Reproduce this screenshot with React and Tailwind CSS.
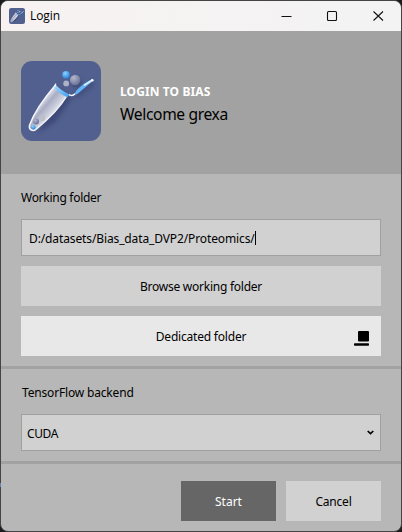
import React from "react";

function TubeLogo({ className }) {
  return (
    <svg viewBox="0 0 80 80" className={className} aria-hidden="true">
      <defs>
        <linearGradient id="glass" gradientUnits="userSpaceOnUse" x1="20" y1="40" x2="34" y2="52">
          <stop offset="0" stopColor="#e4e6ef" />
          <stop offset="0.35" stopColor="#a9adc4" />
          <stop offset="0.7" stopColor="#c6c9d8" />
          <stop offset="1" stopColor="#e6e8f0" />
        </linearGradient>
        <linearGradient id="blue" x1="0" y1="0" x2="1" y2="1">
          <stop offset="0" stopColor="#a4dcff" />
          <stop offset="1" stopColor="#3c9cf0" />
        </linearGradient>
        <radialGradient id="ballBlue" cx="0.4" cy="0.3" r="0.7">
          <stop offset="0" stopColor="#8ad4ff" />
          <stop offset="1" stopColor="#2d84da" />
        </radialGradient>
        <radialGradient id="ballGrey" cx="0.35" cy="0.3" r="0.75">
          <stop offset="0" stopColor="#b4b8cc" />
          <stop offset="1" stopColor="#666d94" />
        </radialGradient>
        <filter id="soft" x="-30%" y="-30%" width="160%" height="160%">
          <feGaussianBlur stdDeviation="2.2" />
        </filter>
      </defs>
      <rect width="80" height="80" rx="11" fill="#52608f" />
      <g fill="#303b68" opacity="0.6" filter="url(#soft)">
        <path d="M38 27 L51 37 L34 61 L17 72 Z" />
        <path d="M50 37 L72 20 L73 24 L57 36 Z" />
        <circle cx="56" cy="22" r="5" />
      </g>
      <path
        d="M34.5 24 L46 34.5 C41 44 30 56 15 68.5 C11.5 71 7.3 68.5 8.6 64 C12.5 53.5 22 38.5 34.5 24 Z"
        fill="url(#glass)"
      />
      <path d="M45.5 35.5 C40.5 44 30 56 15 68.5" fill="none" stroke="#f4f5fa" strokeWidth="1.4" />
      <path d="M34.5 24 C22 38.5 12.5 53.5 8.6 64 C7.3 68.5 11.5 71 15 68.5" fill="none" stroke="#f4f5fa" strokeWidth="1.5" />
      <path d="M34.2 23.6 C37 26.5 42 30.8 48.5 33.4 L46.5 36.2 C40.5 33.8 36 31 33 26.3 Z" fill="url(#blue)" />
      <path d="M33.9 25.5 L34.6 23.2 M48.5 33.8 C50.5 35 52.5 34.5 54.2 32.8" fill="none" stroke="#f2f8ff" strokeWidth="1.4" strokeLinecap="round" />
      <path d="M54 33 C53.5 30 62 23 69.5 18.8 L70.5 21 L57.5 32 C56 33.3 55 33.6 54 33 Z" fill="#62b4f8" />
      <path d="M63.5 24 L71.2 19.2" fill="none" stroke="#d5edff" strokeWidth="1.8" strokeLinecap="round" />
      <circle cx="71.3" cy="19.2" r="1.3" fill="#fff" />
      <circle cx="54.2" cy="19" r="5.3" fill="url(#ballGrey)" />
      <circle cx="45" cy="13.8" r="3.8" fill="url(#ballBlue)" />
      <circle cx="45.2" cy="22.4" r="2.9" fill="#adb2c6" />
      <circle cx="21" cy="56.8" r="3.1" fill="#bcbfca" />
      <circle cx="15" cy="60.5" r="3" fill="url(#ballGrey)" />
      <circle cx="12.3" cy="66.2" r="2.3" fill="url(#ballBlue)" />
    </svg>
  );
}

function TitleBar() {
  return (
    <div className="flex h-[30px] shrink-0 items-center bg-linear-to-r from-[#f7f2f1] to-[#f3f3f4] pl-2">
      <TubeLogo className="size-4" />
      <span className="ml-[5px] font-['Open_Sans',sans-serif] text-[12px] leading-4 tracking-[-0.1px]">Login</span>
      <svg className="ml-auto mr-[17px] h-[12px] w-[103px]" viewBox="0 0 103 12" fill="none" stroke="#111" aria-hidden="true">
        <path d="M0.5 6.5H10.5" />
        <rect x="46.5" y="1.5" width="9" height="9" rx="1" strokeWidth="1.1" />
        <path d="M92.5 1.5L102 10.5M102 1.5L92.5 10.5" strokeWidth="1.1" />
      </svg>
    </div>
  );
}

function Divider() {
  return <div className="h-[3px] shrink-0 bg-[#a2a2a2]" />;
}

export default function App() {
  return (
    <div className="relative h-[532px] w-[402px] bg-[#1b1b1d] font-['Noto_Sans',sans-serif] text-[12px] leading-4 text-black">
      <div className="flex h-full flex-col overflow-hidden rounded-[8px] border border-[#444446] bg-[#b7b7b7]">
        <TitleBar />

        <header className="flex h-[143px] shrink-0 items-start bg-[#a2a2a2] pl-5 pt-[30px]">
          <TubeLogo className="size-20" />
          <div className="ml-[19px] pt-[23px]">
            <h1 className="text-[12px] font-bold leading-4 tracking-[0.1px] text-white">LOGIN TO BIAS</h1>
            <p className="mt-[3px] text-[15.6px] leading-[22px] tracking-[-0.36px]">Welcome grexa</p>
          </div>
        </header>

        <section className="flex h-[192px] shrink-0 flex-col px-5 pt-4">
          <label className="leading-4 tracking-[-0.28px]">Working folder</label>
          <div className="mt-[13px] flex h-[37px] items-center border border-[#a0a0a0] bg-[#d1d1d1] pl-[7px] pt-[3px]">
            <span className="tracking-[-0.12px]">D:/datasets/Bias_data_DVP2/Proteomics/</span>
            <span className="mb-0.5 h-[14px] w-px bg-black" />
          </div>
          <button className="mt-2.5 h-10 bg-[#d1d1d1] pt-0.5 tracking-[-0.25px]">Browse working folder</button>
          <button className="mt-2.5 grid h-10 grid-cols-[40px_1fr_40px] items-center bg-[#e8e8e8]">
            <span className="col-start-2 pt-0.5 tracking-[-0.2px]">Dedicated folder</span>
            <svg className="ml-[13px] mt-1 h-[15px] w-[15px]" viewBox="0 0 15 15" aria-hidden="true">
              <rect x="4" y="0" width="11" height="10.5" rx="1" />
              <rect x="0" y="12.3" width="15" height="2.4" rx="0.8" />
            </svg>
          </button>
        </section>

        <Divider />

        <section className="flex h-[92px] shrink-0 flex-col px-5 pt-4">
          <label className="pl-px leading-4 tracking-[-0.17px]">TensorFlow backend</label>
          <div className="mt-[13px] flex h-[37px] items-center justify-between border border-[#a0a0a0] bg-[#d1d1d1] pl-[5px] pr-1.5 pt-[3px]">
            <span className="tracking-[-0.4px]">CUDA</span>
            <svg className="mb-1 h-[5px] w-[7px]" viewBox="0 0 7 5" fill="none" stroke="#000" strokeWidth="1.7" aria-hidden="true">
              <path d="M0.7 1L3.5 3.6L6.3 1" />
            </svg>
          </div>
        </section>

        <Divider />

        <footer className="flex flex-1 items-start justify-end gap-2.5 pr-5 pt-[17px]">
          <button className="h-10 w-[95px] bg-[#666666] pt-0.5 text-white">Start</button>
          <button className="h-10 w-[95px] bg-[#d1d1d1] pt-0.5 tracking-[-0.2px]">Cancel</button>
        </footer>
      </div>
      <span className="absolute left-0 top-[483px] h-1 w-px bg-[#5d86ad]" />
    </div>
  );
}
